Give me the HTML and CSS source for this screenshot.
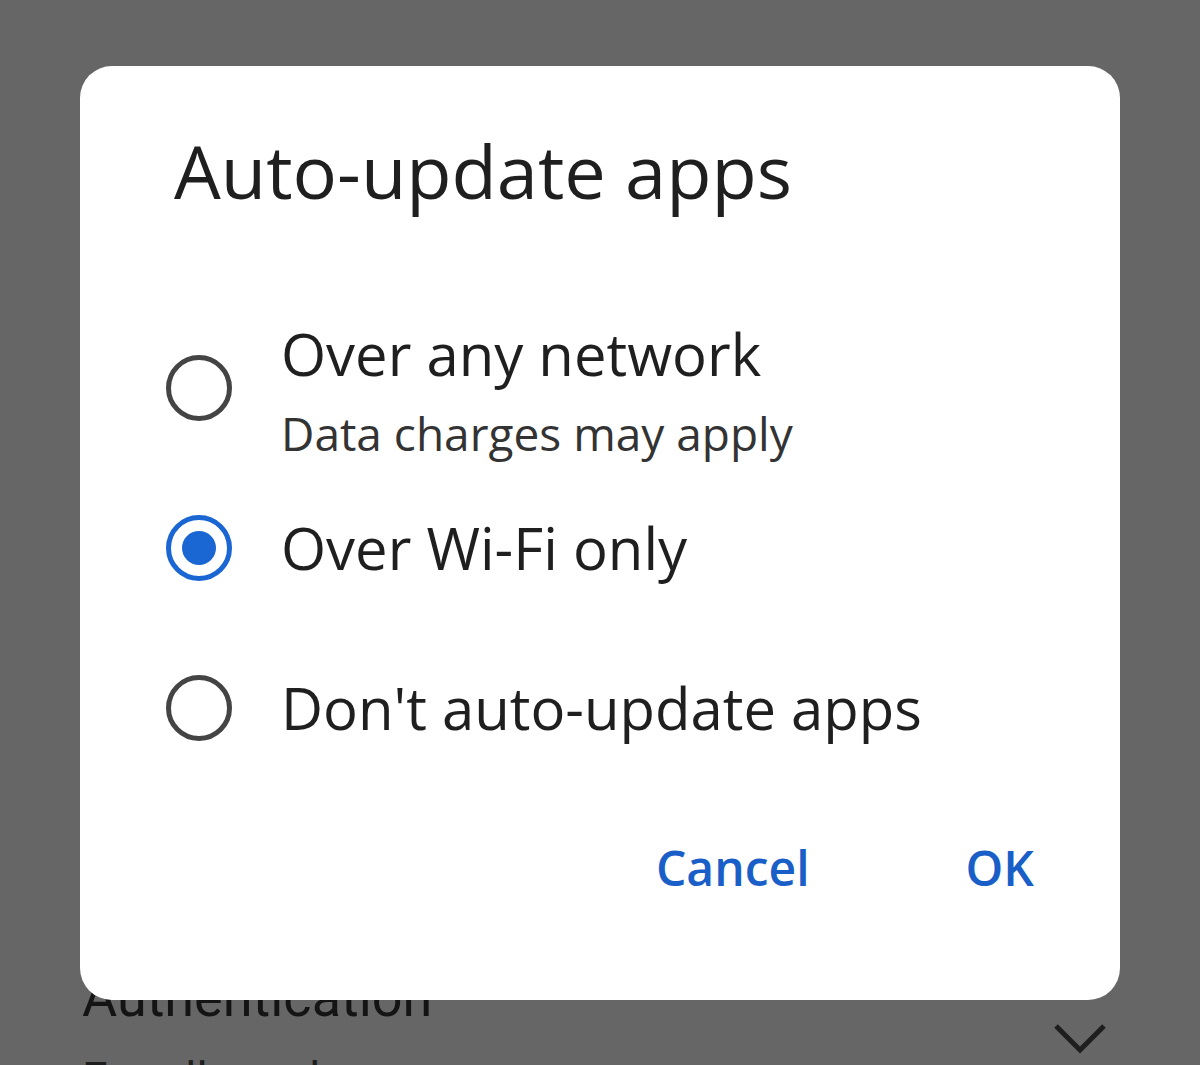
FILE: index.html
```html
<!DOCTYPE html>
<html>
<head>
<meta charset="utf-8">
<link rel="stylesheet" href="styles.css">
</head>
<body>
<div class="screen">
  <div class="behind">
    <div class="behind-row">
      <div class="behind-text">
        <div class="behind-title">Authentication</div>
        <div class="behind-sub">For all purchases</div>
      </div>
      <svg class="chevron" width="56" height="34" viewBox="0 0 56 34"><path d="M4 4 L28 28 L52 4" fill="none" stroke="#1e1e1e" stroke-width="5"/></svg>
    </div>
  </div>
  <div class="dialog">
    <h1 class="title">Auto-update apps</h1>
    <div class="options">
      <div class="option">
        <span class="radio"></span>
        <div class="label">
          <div class="main">Over any network</div>
          <div class="sub">Data charges may apply</div>
        </div>
      </div>
      <div class="option">
        <span class="radio checked"></span>
        <div class="label">
          <div class="main">Over Wi-Fi only</div>
        </div>
      </div>
      <div class="option">
        <span class="radio"></span>
        <div class="label">
          <div class="main">Don't auto-update apps</div>
        </div>
      </div>
    </div>
    <div class="actions">
      <span class="btn">Cancel</span>
      <span class="btn">OK</span>
    </div>
  </div>
</div>
</body>
</html>
```

FILE: styles.css
```css
html, body {
  margin: 0;
  padding: 0;
}
body {
  background: #666666;
  font-family: "Open Sans", Roboto, sans-serif;
}
.screen {
  position: relative;
  width: 1200px;
  height: 1065px;
  overflow: hidden;
  background: #666666;
}
.behind {
  padding-top: 960px;
}
.behind-row {
  display: flex;
  align-items: flex-start;
  justify-content: space-between;
  padding: 0 92px 0 82px;
}
.behind-title {
  font-family: Roboto, sans-serif;
  font-size: 54px;
  line-height: 76px;
  color: #141414;
}
.behind-sub {
  font-family: Roboto, sans-serif;
  font-size: 46px;
  line-height: 66px;
  margin-top: 10px;
  color: #1e1e1e;
  white-space: nowrap;
}
.chevron {
  margin-top: 62px;
}
.dialog {
  position: absolute;
  left: 80px;
  top: 66px;
  width: 1040px;
  height: 934px;
  background: #ffffff;
  border-radius: 32px;
  box-sizing: border-box;
  padding: 0 86px;
}
.title {
  margin: 0;
  padding-top: 63px;
  padding-left: 8px;
  font-size: 74px;
  font-weight: 400;
  line-height: 84px;
  color: #1f1f1f;
}
.options {
  margin-top: 95px;
}
.option {
  display: flex;
  align-items: center;
  height: 160px;
}
.radio {
  flex: none;
  width: 66px;
  height: 66px;
  box-sizing: border-box;
  border: 5px solid #444444;
  border-radius: 50%;
  position: relative;
}
.radio.checked {
  border-color: #1a66d2;
}
.radio.checked::after {
  content: "";
  position: absolute;
  left: 11px;
  top: 11px;
  width: 34px;
  height: 34px;
  border-radius: 50%;
  background: #1a66d2;
}
.label {
  margin-left: 49px;
}
.main {
  font-size: 58px;
  line-height: 90px;
  color: #1f1f1f;
}
.sub {
  font-size: 46px;
  line-height: 68px;
  color: #333333;
}
.actions {
  display: flex;
  justify-content: flex-end;
  gap: 156px;
  margin-top: 50px;
}
.btn {
  font-size: 48px;
  font-weight: 600;
  color: #1a5fc8;
  line-height: 60px;
}
```
